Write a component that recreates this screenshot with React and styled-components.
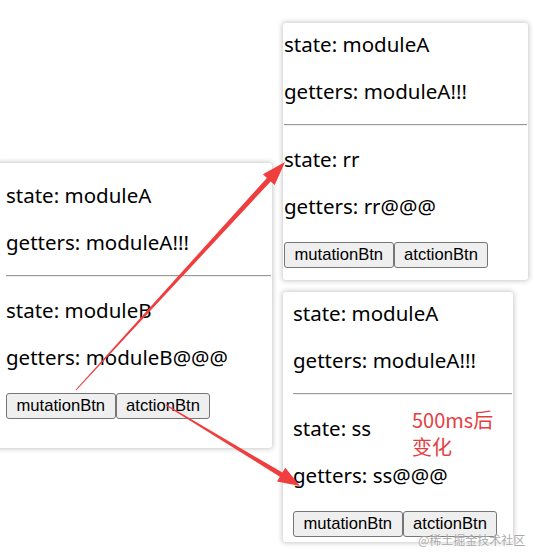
import React from "react";
import styled, { createGlobalStyle } from "styled-components";

const Global = createGlobalStyle`
  html, body { margin: 0; padding: 0; background: #ffffff; }
  body { font-family: "Noto Sans", "Noto Sans CJK SC", sans-serif; }
`;

const Desktop = styled.div`
  position: relative;
  width: 534px;
  height: 560px;
  overflow: hidden;
  background: #ffffff;
`;

const Window = styled.div`
  position: absolute;
  left: ${(p) => p.$x}px;
  top: ${(p) => p.$y}px;
  width: ${(p) => p.$w}px;
  height: ${(p) => p.$h}px;
  background: #ffffff;
  border-radius: 3px;
  box-shadow: 0 0 5px 1px rgba(0, 0, 0, 0.22);
  overflow: hidden;
`;

const Page = styled.div`
  display: flex;
  flex-direction: column;
  align-items: stretch;
  gap: 20px;
  padding: ${(p) => p.$padTop}px 1px 0 ${(p) => p.$padLeft}px;
`;

const Line = styled.p`
  margin: 0;
  font-size: 20.5px;
  line-height: 27px;
  color: #000000;
  white-space: nowrap;
`;

const Rule = styled.hr`
  margin: -1px 0 0;
  border: 0;
  border-top: 1px solid #9a9a9a;
  border-bottom: 1px solid #eeeeee;
  height: 0;
  width: 100%;
`;

const ButtonRow = styled.div`
  display: flex;
  align-items: center;
  margin-top: 2px;
`;

const Button = styled.button`
  height: 26px;
  padding: 0 9.5px;
  margin: 0;
  font-family: "Liberation Sans", Arial, sans-serif;
  font-size: 16.6px;
  color: #000000;
  background: #efefef;
  border: 1px solid #767676;
  border-radius: 3px;
  white-space: nowrap;
`;

const Overlay = styled.svg`
  position: absolute;
  left: 0;
  top: 0;
  width: 534px;
  height: 560px;
  pointer-events: none;
`;

const Note = styled.div`
  position: absolute;
  left: 412px;
  top: 406px;
  font-family: "Noto Sans CJK SC", "Noto Sans", sans-serif;
  font-size: 20px;
  line-height: 27px;
  color: #e5403f;
`;

const Watermark = styled.div`
  position: absolute;
  left: 418px;
  top: 533px;
  font-family: "Noto Sans CJK SC", sans-serif;
  font-size: 12px;
  line-height: 14px;
  color: rgba(140, 140, 140, 0.75);
  text-shadow: 0 0 2px #ffffff;
`;

function arrowPoints([tx, ty], [hx, hy], head = 24, headHalf = 8, neck = 2.6, tail = 0.5) {
  const dx = hx - tx;
  const dy = hy - ty;
  const len = Math.hypot(dx, dy);
  const ux = dx / len;
  const uy = dy / len;
  const nx = -uy;
  const ny = ux;
  const bx = hx - ux * head;
  const by = hy - uy * head;
  const pts = [
    [tx + nx * tail, ty + ny * tail],
    [bx + nx * neck, by + ny * neck],
    [bx + nx * headHalf, by + ny * headHalf],
    [hx, hy],
    [bx - nx * headHalf, by - ny * headHalf],
    [bx - nx * neck, by - ny * neck],
    [tx - nx * tail, ty - ny * tail],
  ];
  return pts.map(([x, y]) => `${x.toFixed(1)},${y.toFixed(1)}`).join(" ");
}

function ModulePage({ a, b, padTop, padLeft }) {
  return (
    <Page $padTop={padTop} $padLeft={padLeft}>
      <Line>state: {a.state}</Line>
      <Line>getters: {a.getters}</Line>
      <Rule />
      <Line>state: {b.state}</Line>
      <Line>getters: {b.getters}</Line>
      <ButtonRow>
        <Button>mutationBtn</Button>
        <Button>atctionBtn</Button>
      </ButtonRow>
    </Page>
  );
}

const moduleA = { state: "moduleA", getters: "moduleA!!!" };

export default function App() {
  return (
    <>
      <Global />
      <Desktop>
        <Window $x={-4} $y={163} $w={276} $h={285}>
          <ModulePage a={moduleA} b={{ state: "moduleB", getters: "moduleB@@@" }} padTop={19} padLeft={10} />
        </Window>
        <Window $x={283} $y={23} $w={245} $h={257}>
          <ModulePage a={moduleA} b={{ state: "rr", getters: "rr@@@" }} padTop={8} padLeft={1} />
        </Window>
        <Window $x={283} $y={292} $w={230} $h={250}>
          <ModulePage a={moduleA} b={{ state: "ss", getters: "ss@@@" }} padTop={8} padLeft={10} />
        </Window>
        <Note>
          500ms后
          <br />
          变化
        </Note>
        <Watermark>@稀土掘金技术社区</Watermark>
        <Overlay viewBox="0 0 534 560">
          <polygon points={arrowPoints([76, 390], [285, 162])} fill="#f03d3d" />
          <polygon points={arrowPoints([166, 405], [300, 486], 22, 8, 2.4, 0.5)} fill="#f03d3d" />
        </Overlay>
      </Desktop>
    </>
  );
}
